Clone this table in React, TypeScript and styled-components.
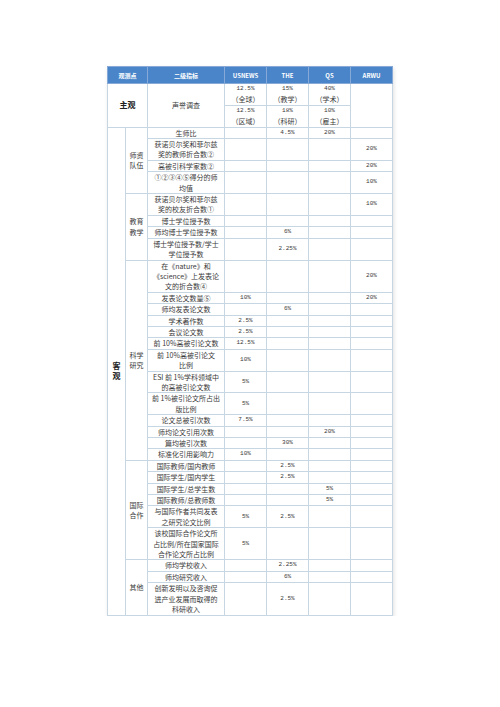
import React from "react";
import styled, { createGlobalStyle } from "styled-components";

const GlobalStyle = createGlobalStyle`
  body {
    margin: 0;
    background: #ffffff;
  }
`;

const Page = styled.div`
  display: flex;
  justify-content: center;
  padding-top: 66px;
`;

const Table = styled.table`
  border-collapse: collapse;
  table-layout: fixed;
  width: 285px;
  font-family: "Noto Sans CJK SC", "Noto Sans", sans-serif;
  font-size: 7px;
  color: #3a3a3a;
  box-shadow: 1px 2px 4px rgba(0, 0, 0, 0.12);
`;

const Head = styled.th`
  height: 16px;
  padding: 0;
  background: #4a85c9;
  color: #ffffff;
  font-weight: bold;
  font-size: 6px;
  border: 1px solid #86a9d8;
  text-align: center;
`;

const Cell = styled.td<{ $bold?: boolean; $big?: boolean }>`
  padding: 0 1px;
  line-height: 10.4px;
  text-align: center;
  vertical-align: middle;
  border: 1px solid #c6d6e2;
  font-weight: ${(p) => (p.$bold ? "bold" : "normal")};
  font-size: ${(p) => (p.$big ? "8px" : "inherit")};
  color: ${(p) => (p.$bold ? "#222" : "inherit")};
  white-space: nowrap;
`;

const Pct = styled.span`
  display: inline-block;
  vertical-align: top;
  line-height: 10.4px;
  font-family: "Liberation Mono", monospace;
  font-size: 6px;
`;

type Row = {
  cat?: { label: string[]; span: number };
  name: string[];
  us?: string;
  the?: string;
  qs?: string;
  arwu?: string;
};

const rows: Row[] = [
  { cat: { label: ["师资", "队伍"], span: 4 }, name: ["生师比"], the: "4.5%", qs: "20%" },
  { name: ["获诺贝尔奖和菲尔兹", "奖的教师折合数②"], arwu: "20%" },
  { name: ["高被引科学家数②"], arwu: "20%" },
  { name: ["①②③④⑤得分的师", "均值"], arwu: "10%" },
  { cat: { label: ["教育", "教学"], span: 4 }, name: ["获诺贝尔奖和菲尔兹", "奖的校友折合数①"], arwu: "10%" },
  { name: ["博士学位授予数"] },
  { name: ["师均博士学位授予数"], the: "6%" },
  { name: ["博士学位授予数/学士", "学位授予数"], the: "2.25%" },
  { cat: { label: ["科学", "研究"], span: 13 }, name: ["在《nature》和", "《science》上发表论", "文的折合数④"], arwu: "20%" },
  { name: ["发表论文数量⑤"], us: "10%", arwu: "20%" },
  { name: ["师均发表论文数"], the: "6%" },
  { name: ["学术著作数"], us: "2.5%" },
  { name: ["会议论文数"], us: "2.5%" },
  { name: ["前 10%高被引论文数"], us: "12.5%" },
  { name: ["前 10%高被引论文", "比例"], us: "10%" },
  { name: ["ESI 前 1%学科领域中", "的高被引论文数"], us: "5%" },
  { name: ["前 1%被引论文所占出", "版比例"], us: "5%" },
  { name: ["论文总被引次数"], us: "7.5%" },
  { name: ["师均论文引用次数"], qs: "20%" },
  { name: ["篇均被引次数"], the: "30%" },
  { name: ["标准化引用影响力"], us: "10%" },
  { cat: { label: ["国际", "合作"], span: 6 }, name: ["国际教师/国内教师"], the: "2.5%" },
  { name: ["国际学生/国内学生"], the: "2.5%" },
  { name: ["国际学生/总学生数"], qs: "5%" },
  { name: ["国际教师/总教师数"], qs: "5%" },
  { name: ["与国际作者共同发表", "之研究论文比例"], us: "5%", the: "2.5%" },
  { name: ["该校国际合作论文所", "占比例/所在国家国际", "合作论文所占比例"], us: "5%" },
  { cat: { label: ["其他"], span: 3 }, name: ["师均学校收入"], the: "2.25%" },
  { name: ["师均研究收入"], the: "6%" },
  { name: ["创新发明以及咨询促", "进产业发展而取得的", "科研收入"], the: "2.5%" },
];

const Lines = ({ items }: { items: string[] }) => (
  <>
    {items.map((t, i) => (
      <React.Fragment key={i}>
        {i > 0 && <br />}
        {t}
      </React.Fragment>
    ))}
  </>
);

const Value = ({ v }: { v?: string }) => <Cell>{v && <Pct>{v}</Pct>}</Cell>;

const Split = ({ v, note }: { v: string; note: string }) => (
  <Cell>
    <Pct>{v}</Pct>
    <br />
    {note}
  </Cell>
);

export default function App() {
  return (
    <>
      <GlobalStyle />
      <Page>
        <Table>
          <colgroup>
            <col style={{ width: 18 }} />
            <col style={{ width: 22 }} />
            <col style={{ width: 77 }} />
            <col style={{ width: 42 }} />
            <col style={{ width: 42 }} />
            <col style={{ width: 42 }} />
            <col style={{ width: 42 }} />
          </colgroup>
          <thead>
            <tr>
              <Head colSpan={2}>观测点</Head>
              <Head>二级指标</Head>
              <Head>USNEWS</Head>
              <Head>THE</Head>
              <Head>QS</Head>
              <Head>ARWU</Head>
            </tr>
          </thead>
          <tbody>
            <tr>
              <Cell colSpan={2} rowSpan={2} $bold $big>
                主观
              </Cell>
              <Cell rowSpan={2}>声誉调查</Cell>
              <Split v="12.5%" note="（全球）" />
              <Split v="15%" note="（教学）" />
              <Split v="40%" note="（学术）" />
              <Cell rowSpan={2} />
            </tr>
            <tr>
              <Split v="12.5%" note="（区域）" />
              <Split v="18%" note="（科研）" />
              <Split v="10%" note="（雇主）" />
            </tr>
            {rows.map((r, i) => (
              <tr key={i}>
                {i === 0 && (
                  <Cell rowSpan={rows.length} $bold $big>
                    客<br />观
                  </Cell>
                )}
                {r.cat && (
                  <Cell rowSpan={r.cat.span}>
                    <Lines items={r.cat.label} />
                  </Cell>
                )}
                <Cell>
                  <Lines items={r.name} />
                </Cell>
                <Value v={r.us} />
                <Value v={r.the} />
                <Value v={r.qs} />
                <Value v={r.arwu} />
              </tr>
            ))}
          </tbody>
        </Table>
      </Page>
    </>
  );
}
